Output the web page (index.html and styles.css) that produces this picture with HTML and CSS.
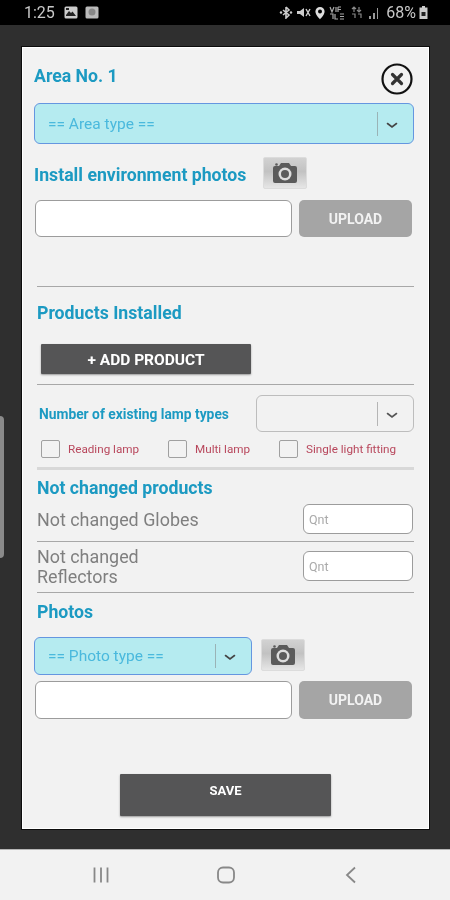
FILE: index.html
```html
<!DOCTYPE html>
<html lang="en">
<head>
  <meta charset="UTF-8">
  <meta name="viewport" content="width=device-width, initial-scale=1.0">
  <title>Area form</title>
  <link rel="stylesheet" href="styles.css">
</head>
<body>
  <div class="screen">
    <!-- status bar -->
    <div class="status">
      <div class="status-left">
        <span class="time">1:25</span>
        <svg class="st-icon" width="14" height="13" viewBox="0 0 14 13"><rect x="0.5" y="0.5" width="13" height="12" rx="1.5" fill="#ccc"/><path d="M2 9l3-4 2 2 1.5-1.5L12 10H2z" fill="#222"/><rect x="2" y="2" width="3" height="2" fill="#222"/></svg>
        <svg class="st-icon" width="14" height="13" viewBox="0 0 14 13"><rect x="0.5" y="0.5" width="13" height="12" rx="1.5" fill="#bbb"/><circle cx="7" cy="6" r="3.5" fill="#888"/></svg>
      </div>
      <div class="status-right">
        <svg width="14" height="13" viewBox="0 0 14 13"><path d="M7 1v11l3-3-6-5M7 1l3 3-6 5" fill="none" stroke="#ccc" stroke-width="1.6"/><circle cx="2" cy="6.5" r="1.2" fill="#ccc"/><circle cx="12" cy="6.5" r="1.2" fill="#ccc"/></svg>
        <svg width="15" height="13" viewBox="0 0 15 13"><path d="M1 5h3l4-3v9L4 8H1z" fill="#ccc"/><path d="M10 3l4 7M14 3l-4 7" stroke="#ccc" stroke-width="1.4"/></svg>
        <svg width="12" height="14" viewBox="0 0 12 14"><path d="M6 1a4.6 4.6 0 0 0-4.6 4.6C1.4 9 6 13.4 6 13.4s4.6-4.4 4.6-7.8A4.6 4.6 0 0 0 6 1z" fill="#ddd"/><circle cx="6" cy="5.6" r="2" fill="#000"/></svg>
        <svg width="16" height="14" viewBox="0 0 16 14"><path d="M1 1l2 5 2-5M7 1v5M9 1v5M9 1h3M9 3.500h3M1 8h3v5M6 8v5h3M11 8h4M11 10.500h4M11 13h4" fill="none" stroke="#aaa" stroke-width="1.200"/></svg>
        <svg class="st-gap" width="11" height="13" viewBox="0 0 11 13"><path d="M3 1v5M1 3l2-2 2 2M8 1v5M6 4l2 2 2-2M1 8h3v4M7 8h3v4" fill="none" stroke="#888" stroke-width="1.200"/></svg>
        <svg class="st-gap" width="13" height="12" viewBox="0 0 13 12"><path d="M1 12V9h2v3zM5 12V6h2v6zM9 12V1h1v11z" fill="#999"/></svg>
        <span class="battery-text">68%</span>
        <svg width="9" height="13" viewBox="0 0 9 13"><path d="M3 0h3v1.500h2.500V13H.5V1.500H3z" fill="#ccc"/><rect x="2.500" y="6" width="4" height="4" fill="#222"/></svg>
      </div>
    </div>

    <div class="scrim">
      <div class="scroll-handle"></div>

      <div class="dialog">
        <div class="head">
          <div class="title title-area">Area No. 1</div>
          <svg class="close" width="32" height="32" viewBox="0 0 32 32">
            <circle cx="16" cy="16" r="14.500" fill="none" stroke="#111" stroke-width="2.200"/>
            <path d="M11.500 11.500l9 9M20.500 11.500l-9 9" stroke="#333" stroke-width="3.200" stroke-linecap="round"/>
          </svg>
        </div>

        <div class="select select-blue select-area">
          <span class="select-text">== Area type ==</span>
          <span class="select-arrow"><svg width="12" height="7" viewBox="0 0 12 7"><path d="M1.500 1.500L6 5l4.500-3.500" fill="none" stroke="#444" stroke-width="1.600" stroke-linecap="round"/></svg></span>
        </div>

        <div class="photo-title-row">
          <div class="title title-photos">Install environment photos</div>
          <div class="cam-btn">
            <svg width="26" height="22" viewBox="0 0 26 22"><path d="M3 4h4l2-3h8l2 3h4a2 2 0 0 1 2 2v13a2 2 0 0 1-2 2H3a2 2 0 0 1-2-2V6a2 2 0 0 1 2-2z" fill="#5b5b5b"/><circle cx="13" cy="12" r="6.500" fill="#ddd"/><circle cx="13" cy="12" r="4" fill="#5b5b5b"/><circle cx="4.500" cy="2.500" r="1.300" fill="#5b5b5b"/></svg>
          </div>
        </div>

        <div class="upload-row">
          <input class="text-input file-input" type="text">
          <button class="upload-btn">UPLOAD</button>
        </div>

        <div class="line line-first"></div>
        <div class="title title-sub products-title">Products Installed</div>
        <button class="dark-btn add-btn">+ ADD PRODUCT</button>
        <div class="line line-add"></div>

        <div class="lamp-row">
          <span class="lamp-label">Number of existing lamp types</span>
          <div class="select select-plain">
            <span class="select-text"></span>
            <span class="select-arrow"><svg width="12" height="7" viewBox="0 0 12 7"><path d="M1.500 1.500L6 5l4.500-3.500" fill="none" stroke="#555" stroke-width="1.600" stroke-linecap="round"/></svg></span>
          </div>
        </div>

        <div class="check-row">
          <label class="check check-a"><span class="box"></span>Reading lamp</label>
          <label class="check check-b"><span class="box"></span>Multi lamp</label>
          <label class="check"><span class="box"></span>Single light fitting</label>
        </div>
        <div class="line-thick"></div>

        <div class="title title-sub changed-title">Not changed products</div>
        <div class="qty-row globes-row">
          <span class="qty-label">Not changed Globes</span>
          <input class="text-input qty-input" type="text" placeholder="Qnt">
        </div>
        <div class="line line-globes"></div>
        <div class="qty-row reflectors-row">
          <span class="qty-label">Not changed<br>Reflectors</span>
          <input class="text-input qty-input" type="text" placeholder="Qnt">
        </div>
        <div class="line line-reflectors"></div>

        <div class="title title-sub photos-title">Photos</div>
        <div class="photo-type-row">
          <div class="select select-blue select-photo">
            <span class="select-text">== Photo type ==</span>
            <span class="select-arrow"><svg width="12" height="7" viewBox="0 0 12 7"><path d="M1.500 1.500L6 5l4.500-3.500" fill="none" stroke="#444" stroke-width="1.600" stroke-linecap="round"/></svg></span>
          </div>
          <div class="cam-btn">
            <svg width="26" height="22" viewBox="0 0 26 22"><path d="M3 4h4l2-3h8l2 3h4a2 2 0 0 1 2 2v13a2 2 0 0 1-2 2H3a2 2 0 0 1-2-2V6a2 2 0 0 1 2-2z" fill="#5b5b5b"/><circle cx="13" cy="12" r="6.500" fill="#ddd"/><circle cx="13" cy="12" r="4" fill="#5b5b5b"/><circle cx="4.500" cy="2.500" r="1.300" fill="#5b5b5b"/></svg>
          </div>
        </div>
        <div class="upload-row upload-row-2">
          <input class="text-input file-input" type="text">
          <button class="upload-btn">UPLOAD</button>
        </div>

        <button class="dark-btn save-btn">SAVE</button>
      </div>
    </div>

    <!-- android nav bar -->
    <div class="navbar">
      <svg width="18" height="18" viewBox="0 0 18 18"><path d="M2.500 1.500v15M9 1.500v15M15.500 1.500v15" stroke="#888" stroke-width="1.800"/></svg>
      <svg width="20" height="18" viewBox="0 0 20 18"><rect x="2" y="1.500" width="16" height="15" rx="5" fill="none" stroke="#888" stroke-width="1.800"/></svg>
      <svg width="14" height="18" viewBox="0 0 14 18"><path d="M11 1.500L3 9l8 7.500" fill="none" stroke="#888" stroke-width="1.800"/></svg>
    </div>
  </div>
</body>
</html>
```

FILE: styles.css
```css
* {
  box-sizing: border-box;
}
body {
  margin: 0;
  font-family: Roboto, "Liberation Sans", sans-serif;
}
/* the source is a soft video frame, so everything gets a slight blur */
.screen {
  width: 450px;
  height: 900px;
  display: flex;
  flex-direction: column;
  overflow: hidden;
  filter: blur(0.4px);
}

/* status bar */
.status {
  height: 25px;
  background-color: #000;
  display: flex;
  justify-content: space-between;
  align-items: center;
  padding: 0 22px 0 24px;
  color: #c8c8c8;
}
.status-left,
.status-right {
  display: flex;
  align-items: center;
}
.time {
  font-size: 16px;
  margin-right: 9px;
}
.st-icon {
  margin-right: 7px;
}
.status-right svg {
  margin-right: 3px;
}
.status-right .st-gap {
  margin-left: 3px;
}
.battery-text {
  font-size: 16px;
  margin: 0 3px 0 2px;
}
.status-right svg:last-child {
  margin-right: 0;
}

/* dark area behind the dialog */
.scrim {
  position: relative;
  flex: 1;
  background-color: #2f2f2f;
  padding: 22px 21px 20px 22px;
}
.scroll-handle {
  position: absolute;
  left: 0;
  top: 391px;
  width: 4px;
  height: 142px;
  background-color: #8a8a8a;
  border-radius: 0 4px 4px 0;
}
.dialog {
  height: 782px;
  background-color: #f2f2f2;
  border: 1px solid #fff;
  box-shadow: 0 0 0 1px #0c0c0c;
  padding: 0 14px 0 11px;
}

.head {
  display: flex;
  justify-content: space-between;
  margin-top: 15px;
  height: 33px;
}
.close {
  margin-right: 1px;
}
.title {
  font-size: 17.700px;
  line-height: 24px;
  font-weight: 700;
  color: #1c9ac2;
}
.title-area {
  margin-top: 1px;
}
.title-sub {
  margin-left: 3px;
}

/* selects */
.select {
  display: flex;
  align-items: center;
  border-radius: 6px;
  font-size: 15.500px;
}
.select-blue {
  background-color: #b5ebf0;
  border: 1.5px solid #6596e0;
  color: #4ab9dd;
}
.select-plain {
  width: 158px;
  height: 37px;
  border: 1.5px solid #bdbdbd;
}
.select-area {
  margin-top: 7px;
  height: 41px;
}
.select-photo {
  width: 218px;
  height: 38px;
}
.select-text {
  flex: 1;
  padding-left: 13px;
}
.select-arrow {
  width: 36px;
  height: 24px;
  border-left: 1px solid #9ab3b6;
  display: flex;
  align-items: center;
  padding: 3px 0 0 8px;
}
.select-plain .select-arrow {
  border-left-color: #b5b5b5;
}

.photo-title-row {
  display: flex;
  margin-top: 13px;
  height: 32px;
}
.title-photos {
  padding-top: 6px;
  width: 229px;
}
.cam-btn {
  width: 44px;
  height: 32px;
  background: linear-gradient(#d2d2d2, #c2c2c2 45%, #e6e6e6);
  border: 1px solid #dcdcdc;
  border-radius: 2px;
  display: flex;
  align-items: center;
  justify-content: center;
}

/* inputs and upload */
.upload-row {
  display: flex;
  margin: 11px 0 0 1px;
  height: 37px;
}
.upload-row-2 {
  margin-top: 6px;
  height: 38px;
}
.text-input {
  background-color: #fff;
  border: 1.5px solid #9c9c9c;
  border-radius: 6px;
  font-family: Roboto, "Liberation Sans", sans-serif;
  outline: none;
}
.file-input {
  width: 257px;
}
.upload-btn {
  width: 113px;
  margin-left: 7px;
  background-color: #a5a5a5;
  border: none;
  border-radius: 5px;
  color: #f2f2f2;
  font-family: Roboto, "Liberation Sans", sans-serif;
  font-weight: 700;
  font-size: 14px;
}

/* separators */
.line {
  height: 1px;
  margin-left: 3px;
  background-color: #a8a8a8;
}
.line-first {
  margin-top: 49px;
}
.line-add {
  margin-top: 10px;
}
.line-globes {
  margin-top: 7px;
}
.line-reflectors {
  margin-top: 11px;
}
.line-thick {
  height: 3px;
  margin: 9px 0 0 3px;
  background-color: #d8d8d8;
}

.products-title {
  margin-top: 14px;
}
.dark-btn {
  display: block;
  background-color: #555556;
  border: none;
  border-radius: 1px;
  color: #fff;
  font-family: Roboto, "Liberation Sans", sans-serif;
  font-weight: 700;
  box-shadow: 0 1px 2px #999;
}
.add-btn {
  width: 210px;
  height: 30px;
  margin: 19px 0 0 7px;
  padding-top: 3px;
  font-size: 15.500px;
}

.lamp-row {
  display: flex;
  justify-content: space-between;
  align-items: center;
  margin: 10px 0 0 5px;
  height: 37px;
}
.lamp-label {
  font-size: 13.800px;
  font-weight: 700;
  color: #1c9ac2;
}

.check-row {
  display: flex;
  margin: 8px 0 0 7px;
  height: 18px;
}
.check {
  display: flex;
  align-items: center;
  font-size: 11.700px;
  color: #b8475c;
}
.check-a {
  width: 127px;
}
.check-b {
  width: 111px;
}
.box {
  width: 19px;
  height: 18px;
  margin-right: 8px;
  border: 1.5px solid #a0a0a0;
  border-radius: 2px;
}

.changed-title {
  margin-top: 6px;
}
.qty-row {
  display: flex;
  justify-content: space-between;
  align-items: center;
  height: 30px;
  margin-left: 3px;
}
.globes-row {
  margin-top: 4px;
}
.reflectors-row {
  margin-top: 9px;
}
.qty-label {
  font-size: 17.900px;
  line-height: 20px;
  color: #7f7f7f;
  padding-top: 1px;
}
.qty-input {
  width: 110px;
  height: 30px;
  margin-right: 1px;
  padding-left: 5px;
  font-size: 12.500px;
}
.qty-input::placeholder {
  color: #aaa;
}

.photos-title {
  margin-top: 7px;
}
.photo-type-row {
  display: flex;
  align-items: center;
  margin-top: 13px;
  height: 38px;
}
.photo-type-row .cam-btn {
  margin-left: 9px;
  margin-bottom: 2px;
}

.save-btn {
  width: 211px;
  height: 42px;
  margin: 55px 0 0 86px;
  padding-bottom: 10px;
  font-size: 13px;
}

/* nav bar */
.navbar {
  height: 51px;
  background-color: #f2f2f2;
  border-top: 1px solid #b5b5b5;
  display: grid;
  grid-template-columns: repeat(3, 1fr);
  justify-items: center;
  align-items: center;
  padding: 0 37px 0 38px;
}
```
